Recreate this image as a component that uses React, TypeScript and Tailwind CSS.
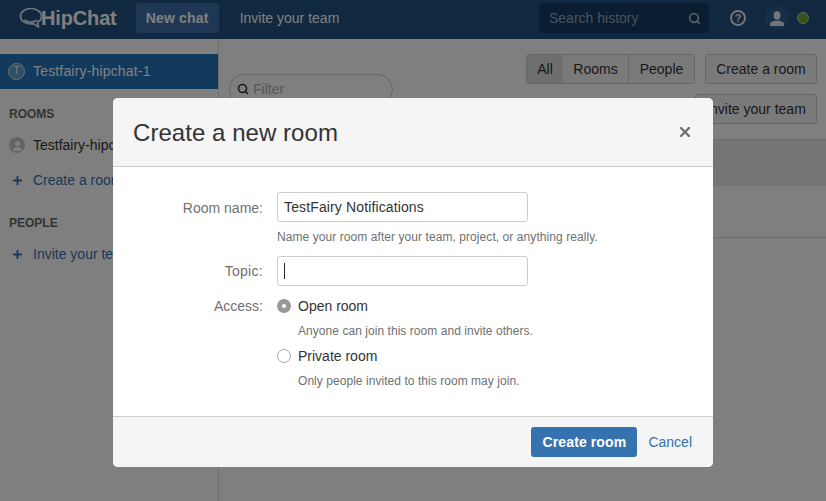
import { Plus, Search, X } from "lucide-react";

const font = { fontFamily: '"Liberation Sans", Arial, sans-serif' };

const Logo = () => (
  <svg width="24" height="22" viewBox="0 0 24 22" fill="none" stroke="#e4e7ea" strokeWidth="1.7">
    <path d="M12 1.500c5.700 0 10.500 3.300 10.500 7.800 0 2.600-1.500 4.800-3.800 6.200l.8 4.500-5-3.300c-.8.100-1.600.2-2.500.2-5.700 0-10.500-3.100-10.500-7.600S6.300 1.500 12 1.500z" strokeLinejoin="round" />
    <path d="M6 13.500c3.500 1.800 8.500 1.800 12 0" strokeLinecap="round" />
  </svg>
);

const Nav = () => (
  <header className="flex h-[39px] items-center bg-[#205081] pb-[3px] pl-[19px]">
    <Logo />
    <span className="ml-[-2px] text-[20px] font-bold tracking-[-0.15px] text-white">HipChat</span>
    <a className="ml-[19px] flex h-[30px] items-center rounded-[3px] bg-[#3a6fa8] px-[10px] text-sm font-bold tracking-[0.2px] text-white">New chat</a>
    <a className="ml-[21px] text-sm font-medium text-white">Invite your team</a>
    <div className="ml-auto flex h-[30px] w-[170px] items-center justify-between rounded-[3px] bg-[#153a63] pl-[10px] pr-[8px] text-sm text-[#8fa6bf]">
      <span>Search history</span>
      <Search size={13} strokeWidth={3.4} className="text-[#a9b8c8]" />
    </div>
    <div className="ml-[21px] flex h-4 w-4 items-center justify-center rounded-full border-2 border-[#e6e9ed] text-[11px] font-bold leading-none text-[#e6e9ed]">?</div>
    <div className="ml-[19px] flex h-6 w-6 items-center justify-center rounded-full bg-[#2c5f92]">
      <svg width="14" height="15" viewBox="0 0 14 15" fill="#e6e9ed">
        <ellipse cx="7" cy="4.500" rx="3.400" ry="4.200" />
        <path d="M0 15v-2.500c0-1.500 3-2 4.500-2.800h5c1.500.8 4.500 1.300 4.500 2.800V15z" />
      </svg>
    </div>
    <div className="ml-2 mr-[17px] h-3 w-3 rounded-full border border-[#a8cf94] bg-[#6fa83f]" />
  </header>
);

const Sidebar = () => (
  <aside className="w-[219px] shrink-0 border-r border-[#dddddd] pt-[15px] text-sm">
    <div className="flex h-[35px] items-center bg-[#2574b8] pb-px pl-2 text-white">
      <span className="flex h-[17px] w-[17px] items-center justify-center rounded-full border border-[#cfe0ee] bg-[#5c9fd0] text-[10px]">T</span>
      <span className="ml-2 font-medium tracking-[0.17px]">Testfairy-hipchat-1</span>
    </div>
    <h3 className="mt-[17px] pl-[9px] text-xs font-bold text-[#666666]">ROOMS</h3>
    <div className="mt-[13px] flex items-center pl-[9px] text-[#333333]">
      <span className="flex h-4 w-4 items-center justify-center rounded-full bg-[#c8c8c8]">
        <svg width="10" height="11" viewBox="0 0 10 11" fill="#ffffff">
          <circle cx="5.500" cy="3.500" r="2.500" />
          <path d="M1 11c0-3 2-4 4.500-4S10 8 10 11z" />
        </svg>
      </span>
      <span className="ml-2">Testfairy-hipchat-1</span>
    </div>
    <div className="mt-[15px] flex items-center pl-[11px] text-[#3572b0]">
      <Plus size={13} strokeWidth={3.4} />
      <span className="ml-[9px]">Create a room</span>
    </div>
    <h3 className="mt-[25px] pl-[9px] text-xs font-bold text-[#666666]">PEOPLE</h3>
    <div className="mt-[13px] flex items-center pl-[11px] text-[#3572b0]">
      <Plus size={13} strokeWidth={3.4} />
      <span className="ml-[9px]">Invite your team</span>
    </div>
  </aside>
);

const Lobby = () => (
  <main className="relative flex-1">
    <div className="flex flex-col items-end gap-[10px] pr-[9px] pt-[15px] text-sm text-[#333333]">
      <div className="flex gap-[10px]">
        <div className="flex h-[30px] overflow-hidden rounded-[3px] border border-[#cccccc]">
          <span className="flex w-[36px] items-center justify-center bg-[#dddddd]">All</span>
          <span className="flex w-[66px] items-center justify-center border-r border-[#cccccc] bg-[#f5f5f5]">Rooms</span>
          <span className="flex w-[65px] items-center justify-center bg-[#f5f5f5]">People</span>
        </div>
        <span className="flex h-[30px] w-[112px] items-center justify-center rounded-[3px] border border-[#cccccc] bg-[#f5f5f5]">Create a room</span>
      </div>
      <span className="flex h-[30px] w-[122px] items-center justify-center rounded-[3px] border border-[#cccccc] bg-[#f5f5f5]">Invite your team</span>
    </div>
    <div className="absolute left-[10px] top-[35px] flex h-[31px] w-[164px] items-center gap-1 rounded-full border border-[#cccccc] bg-white pb-[2px] pl-[7px] text-sm text-[#b0b0b0]">
      <Search size={12} strokeWidth={3.2} className="text-[#333333]" />
      <span>Filter</span>
    </div>
    <div className="mt-[15px] h-[99px] border-b border-[#dddddd]">
      <div className="h-[47px] border-t border-[#dddddd] bg-[#ebebeb]" />
    </div>
  </main>
);

const Field = ({ label, labelClass = "pt-[6px]", children }: { label: string; labelClass?: string; children: React.ReactNode }) => (
  <div className="flex items-start">
    <label className={`w-[150px] text-right text-sm text-[#707070] ${labelClass}`}>{label}</label>
    <div className="ml-[14px]">{children}</div>
  </div>
);

const Radio = ({ checked, label, hint }: { checked?: boolean; label: string; hint: string }) => (
  <div>
    <div className="flex h-5 items-center">
      {checked ? (
        <span className="flex h-[14px] w-[14px] items-center justify-center rounded-full bg-[#999999]">
          <span className="h-1 w-1 rounded-full bg-white" />
        </span>
      ) : (
        <span className="h-[14px] w-[14px] rounded-full border border-[#aaaaaa] bg-white" />
      )}
      <span className="ml-[7px] text-sm text-[#333333]">{label}</span>
    </div>
    <p className="ml-[21px] mt-[5px] text-xs leading-[20px] tracking-[0.05px] text-[#707070]">{hint}</p>
  </div>
);

const CreateRoomDialog = () => (
  <div className="absolute inset-0 bg-black/50">
    <div className="absolute left-[113px] top-[98px] flex h-[369px] w-[600px] flex-col overflow-hidden rounded-[5px] bg-white">
      <div className="flex h-[69px] shrink-0 items-center justify-between border-b border-[#cccccc] bg-[#f5f5f5] pl-5 pr-5">
        <h2 className="pt-px text-2xl font-normal tracking-[0.05px] text-[#333333]">Create a new room</h2>
        <X size={16} strokeWidth={3.6} className="text-[#707070]" />
      </div>
      <div className="flex-1 pt-[25px]">
        <Field label="Room name:">
          <div className="flex h-[30px] w-[251px] items-center rounded-[3px] border border-[#cccccc] px-[6px] text-sm tracking-[0.13px] text-[#333333]">TestFairy Notifications</div>
          <p className="mt-[5px] text-xs leading-[20px] tracking-[0.07px] text-[#707070]">Name your room after your team, project, or anything really.</p>
        </Field>
        <div className="mt-[9px]">
          <Field label="Topic:" labelClass="pt-[5px] tracking-[0.3px]">
            <div className="flex h-[30px] w-[251px] items-center rounded-[3px] border border-[#cccccc] px-[6px]">
              <span className="h-4 w-px bg-[#222222]" />
            </div>
          </Field>
        </div>
        <div className="mt-[4px]">
          <Field label="Access:">
            <div className="flex flex-col gap-[5px] pt-[6px]">
              <Radio checked label="Open room" hint="Anyone can join this room and invite others." />
              <Radio label="Private room" hint="Only people invited to this room may join." />
            </div>
          </Field>
        </div>
      </div>
      <div className="flex h-[51px] shrink-0 items-center justify-end border-t border-[#cccccc] bg-[#f5f5f5] pr-[21px]">
        <button className="h-[30px] w-[106px] rounded-[3px] bg-[#3572b0] text-sm font-bold tracking-[0.1px] text-white">Create room</button>
        <a className="ml-[11px] text-sm text-[#3572b0]">Cancel</a>
      </div>
    </div>
  </div>
);

export default function App() {
  return (
    <div className="relative flex h-[501px] w-[826px] flex-col overflow-hidden bg-white" style={font}>
      <Nav />
      <div className="flex flex-1">
        <Sidebar />
        <Lobby />
      </div>
      <CreateRoomDialog />
    </div>
  );
}
